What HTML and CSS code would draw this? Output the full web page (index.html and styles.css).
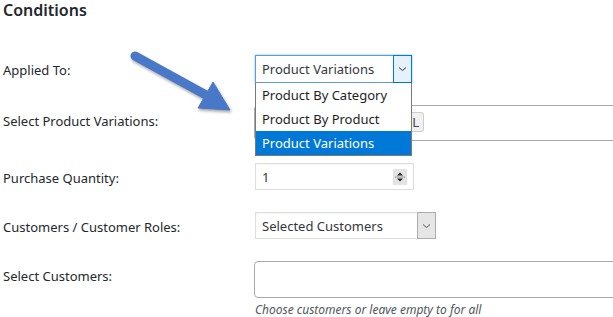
FILE: index.html
```html
<!DOCTYPE html>
<html lang="en">
<head>
    <meta charset="UTF-8">
    <title>Conditions</title>
    <link rel="stylesheet" href="styles.css">
</head>
<body>
<div class="panel">
    <h3 class="title">Conditions</h3>

    <div class="rows">
        <div class="row row-applied">
            <label class="label">Applied To:</label>
            <div class="field">
                <div class="select select-open">
                    <span class="select-value">Product Variations</span>
                    <span class="select-btn"><svg width="9" height="6" viewBox="0 0 9 6"><path d="M1 1.5l3.5 3 3.5-3" fill="none" stroke="#333" stroke-width="1"/></svg></span>
                </div>
                <ul class="dropdown">
                    <li>Product By Category</li>
                    <li>Product By Product</li>
                    <li class="active">Product Variations</li>
                </ul>
            </div>
        </div>

        <div class="row row-variations">
            <label class="label">Select Product Variations:</label>
            <div class="field">
                <div class="multi">
                    <span class="chip">L</span>
                </div>
            </div>
        </div>

        <div class="row">
            <label class="label">Purchase Quantity:</label>
            <div class="field">
                <div class="number">
                    <span class="number-value">1</span>
                    <span class="spin">
                        <svg width="14" height="16" viewBox="0 0 14 16">
                            <path d="M4 6.5h6l-3-3z" fill="#222"/>
                            <path d="M2 8h10" stroke="#999" stroke-width="1"/>
                            <path d="M4 9.5h6l-3 3z" fill="#222"/>
                        </svg>
                    </span>
                </div>
            </div>
        </div>

        <div class="row">
            <label class="label">Customers / Customer Roles:</label>
            <div class="field">
                <div class="select select-plain">
                    <span class="select-value">Selected Customers</span>
                    <span class="select-btn"><svg width="9" height="6" viewBox="0 0 9 6"><path d="M1 1.5l3.5 3 3.5-3" fill="none" stroke="#555" stroke-width="1"/></svg></span>
                </div>
            </div>
        </div>

        <div class="row">
            <label class="label">Select Customers:</label>
            <div class="field">
                <div class="multi multi-empty"></div>
                <p class="hint">Choose customers or leave empty to for all</p>
            </div>
        </div>
    </div>

    <!-- annotation arrow drawn over the form -->
    <svg class="arrow" width="120" height="80" viewBox="0 0 120 80">
        <path d="M5 6L76 45" stroke="#4a78c8" stroke-width="9" stroke-linecap="round"/>
        <path d="M83 32L68 58L100 60z" fill="#4a78c8" stroke="#4a78c8" stroke-width="1" stroke-linejoin="round"/>
    </svg>
</div>
</body>
</html>
```

FILE: styles.css
```css
html, body {
    margin: 0;
    padding: 0;
    background: #fff;
    overflow: hidden;
}

body {
    font-family: "Noto Sans", "Open Sans", sans-serif;
    font-size: 13px;
    color: #23282d;
}

.panel {
    position: relative;
    width: 613px;
    height: 317px;
    padding-left: 3px;
    box-sizing: border-box;
}

.title {
    margin: 0;
    font-size: 16px;
    font-weight: 600;
    line-height: 20px;
}

.rows {
    display: flex;
    flex-direction: column;
    gap: 22px;
    margin-top: 35px;
}

.row {
    display: flex;
    align-items: flex-start;
}

.label {
    width: 252px;
    flex-shrink: 0;
    padding-top: 7px;
    line-height: 17px;
}

.row-variations .label {
    padding-top: 8px;
}

.field {
    position: relative;
}

/* select boxes */
.select {
    display: flex;
    align-items: stretch;
    height: 27px;
    box-sizing: border-box;
    background: #fff;
    color: #32373c;
}

.select-value {
    flex: 1;
    padding-left: 6px;
    line-height: 25px;
}

.select-btn {
    display: flex;
    align-items: center;
    justify-content: center;
    width: 17px;
}

.select-open {
    width: 157px;
    height: 28px;
    border: 1px solid #5b9dd9;
    box-shadow: 0 0 2px rgba(30, 140, 190, 0.6);
}

.select-open .select-value {
    line-height: 26px;
}

.select-open .select-btn {
    border: 1px solid #0078d7;
    background: #e5f1fb;
    margin: -1px -1px -1px 0;
}

.select-plain {
    width: 181px;
    border: 1px solid #ddd;
    box-shadow: inset 0 1px 2px rgba(0, 0, 0, 0.04);
}

.select-plain .select-value {
    padding-top: 1px;
}

.select-plain .select-btn {
    width: 17px;
    border: 1px solid #adadad;
    background: #e6e6e6;
    margin: -1px -1px -1px 0;
}

.dropdown {
    position: absolute;
    top: 28px;
    left: 0;
    z-index: 3;
    width: 157px;
    box-sizing: border-box;
    margin: 0;
    padding: 0;
    list-style: none;
    background: #fff;
    border: 1px solid #7a7a7a;
    border-top: none;
}

.dropdown li {
    height: 24px;
    line-height: 24px;
    padding-left: 6px;
    color: #1e1e1e;
}

.dropdown li.active {
    background: #0078d7;
    color: #fff;
}

/* multi select inputs */
.multi {
    width: 380px;
    height: 36px;
    box-sizing: border-box;
    border: 1px solid #aaa;
    border-radius: 4px;
    padding: 6px 0 0 4px;
    margin-left: -1px;
}

.multi-empty {
    height: 37px;
}

.chip {
    display: inline-block;
    width: 165px;
    height: 20px;
    box-sizing: border-box;
    border: 1px solid #ccc;
    border-radius: 3px;
    background: #f1f1f1;
    text-align: right;
    padding-right: 4px;
    line-height: 18px;
    color: #444;
}

/* number input */
.number {
    display: flex;
    align-items: center;
    width: 159px;
    height: 27px;
    box-sizing: border-box;
    border: 1px solid #ddd;
    box-shadow: inset 0 1px 2px rgba(0, 0, 0, 0.04);
    color: #32373c;
}

.number-value {
    flex: 1;
    padding-left: 6px;
}

.spin {
    display: flex;
    width: 14px;
    height: 16px;
    margin-right: 6px;
    background: #e3e3e3;
}

.hint {
    margin: 4px 0 0;
    font-size: 12px;
    font-style: italic;
    color: #50575e;
    line-height: 16px;
}

.arrow {
    position: absolute;
    left: 130px;
    top: 50px;
    filter: drop-shadow(1px 2px 1.5px rgba(0, 0, 0, 0.35));
}
```
